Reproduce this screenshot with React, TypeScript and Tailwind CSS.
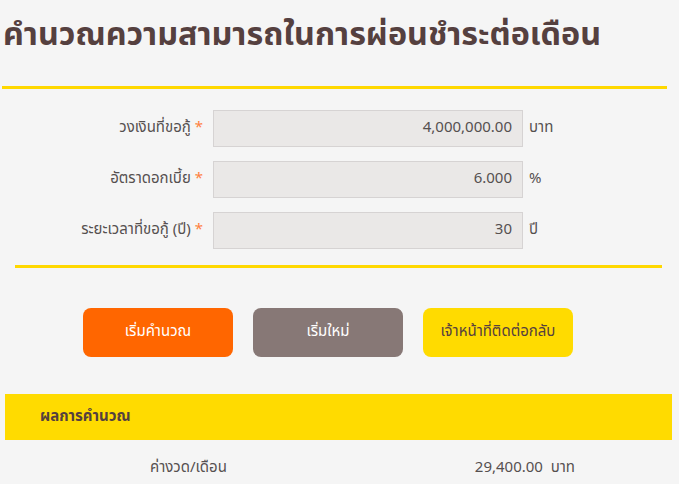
import React from 'react';

const fields = [
  { label: 'วงเงินที่ขอกู้', value: '4,000,000.00', unit: 'บาท' },
  { label: 'อัตราดอกเบี้ย', value: '6.000', unit: '%' },
  { label: 'ระยะเวลาที่ขอกู้ (ปี)', value: '30', unit: 'ปี' },
];

export default function App() {
  return (
    <div
      className="min-h-screen bg-[#f5f5f5] text-[#555050]"
      style={{ fontFamily: '"Noto Sans Thai", "Noto Sans", sans-serif' }}
    >
      <h1 className="pl-[3px] pt-[14px] text-[32.3px] font-bold leading-[44px] text-[#55403f]">
        คำนวณความสามารถในการผ่อนชำระต่อเดือน
      </h1>

      <div className="ml-[2px] mt-[28px] h-[3px] w-[665px] bg-[#ffd800]" />

      {/* ฟอร์มกรอกข้อมูล */}
      <div className="mt-[21px] flex flex-col gap-[14px]">
        {fields.map((f) => (
          <div key={f.label} className="flex items-center">
            <label className="w-[203px] text-right text-[15px]">
              {f.label} <span className="text-[#ff8040]">*</span>
            </label>
            <div className="ml-[10px] flex h-[37px] w-[310px] items-center justify-end border border-[#d6d3d3] bg-[#eae8e7] pr-[10px] text-[15px]">
              {f.value}
            </div>
            <span className="ml-[6px] text-[15px]">{f.unit}</span>
          </div>
        ))}
      </div>

      <div className="ml-[15px] mt-[16px] h-[3px] w-[647px] bg-[#ffd800]" />

      <div className="mt-[40px] flex gap-[20px] pl-[83px]">
        <button className="h-[49px] w-[150px] rounded-[8px] bg-[#ff6600] text-[15px] text-white">
          เริ่มคำนวณ
        </button>
        <button className="h-[49px] w-[150px] rounded-[8px] bg-[#877876] text-[15px] text-white">
          เริ่มใหม่
        </button>
        <button className="h-[49px] w-[150px] rounded-[8px] bg-[#ffdb00] text-[15px] text-[#55403f]">
          เจ้าหน้าที่ติดต่อกลับ
        </button>
      </div>

      <div className="ml-[5px] mt-[37px] flex h-[46px] w-[667px] items-center bg-[#ffdb00] pl-[35px] text-[15px] font-bold text-[#55403f]">
        ผลการคำนวณ
      </div>

      <div className="mt-[17px] flex text-[15px]">
        <span className="pl-[150px]">ค่างวด/เดือน</span>
        <span className="ml-auto mr-[104px]">29,400.00&nbsp;&nbsp;บาท</span>
      </div>
    </div>
  );
}
